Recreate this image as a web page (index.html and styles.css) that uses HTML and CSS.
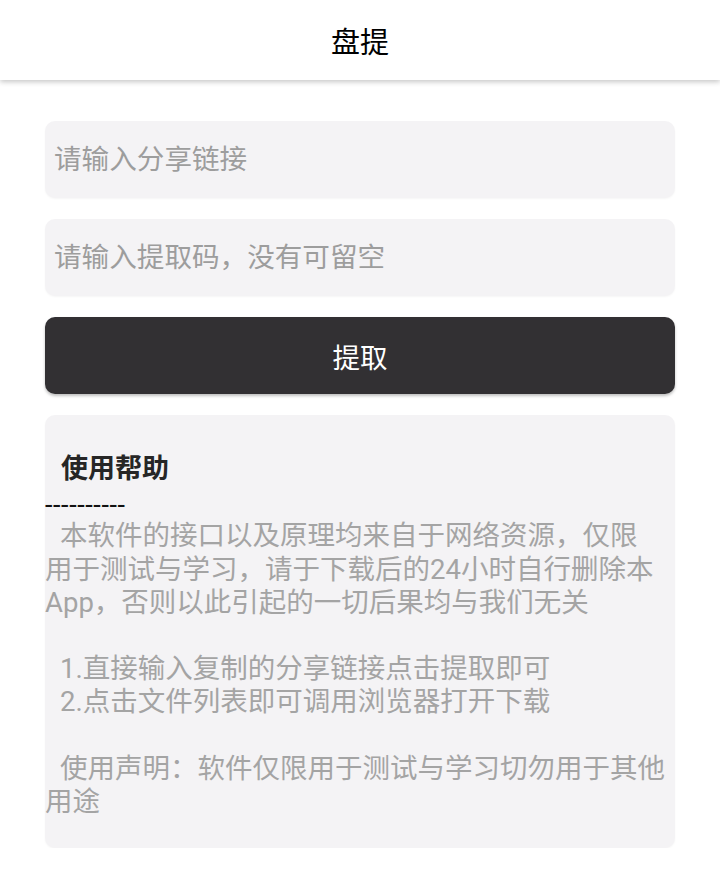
FILE: index.html
```html
<!DOCTYPE html>
<html lang="zh-CN">
<head>
<meta charset="utf-8">
<title>盘提</title>
<link rel="stylesheet" href="styles.css">
</head>
<body>
<header class="appbar">
  <h1 class="appbar-title">盘提</h1>
</header>
<main class="content">
  <input class="field" type="text" placeholder="请输入分享链接">
  <input class="field" type="text" placeholder="请输入提取码，没有可留空">
  <button class="btn-extract" type="button">提取</button>
  <section class="help-card">
    <h2 class="help-title">使用帮助</h2>
    <div class="help-rule">----------</div>
    <p class="help-text"><span class="indent"></span>本软件的接口以及原理均来自于网络资源，仅限<br>用于测试与学习，请于下载后的24小时自行删除本<br>App，否则以此引起的一切后果均与我们无关</p>
    <p class="help-text blank">&nbsp;</p>
    <p class="help-text"><span class="indent"></span>1.直接输入复制的分享链接点击提取即可</p>
    <p class="help-text"><span class="indent"></span>2.点击文件列表即可调用浏览器打开下载</p>
    <p class="help-text blank">&nbsp;</p>
    <p class="help-text"><span class="indent"></span>使用声明：软件仅限用于测试与学习切勿用于其他<br>用途</p>
  </section>
</main>
</body>
</html>
```

FILE: styles.css
```css
* { box-sizing: border-box; }

html, body {
  margin: 0;
  padding: 0;
  background: #ffffff;
  font-family: Roboto, "Noto Sans CJK SC", sans-serif;
}

.appbar {
  height: 80px;
  background: #ffffff;
  display: flex;
  align-items: center;
  justify-content: center;
  box-shadow: 0 2px 5px rgba(0, 0, 0, 0.22);
  position: relative;
  z-index: 1;
}

.appbar-title {
  margin: 0;
  padding-top: 7px;
  font-size: 29px;
  font-weight: 400;
  color: #000000;
  line-height: 1;
}

.content {
  padding: 41px 45px 0;
  display: flex;
  flex-direction: column;
  gap: 21px;
}

.field {
  display: block;
  width: 100%;
  height: 77px;
  border: none;
  outline: none;
  border-radius: 10px;
  background: #f4f3f5;
  padding: 0 9px;
  font-family: Roboto, "Noto Sans CJK SC", sans-serif;
  font-size: 27.6px;
  color: #333333;
  box-shadow: 0 1px 2px rgba(0, 0, 0, 0.04);
}

.field::placeholder {
  color: #9d9d9d;
}

.btn-extract {
  display: block;
  width: 100%;
  height: 77px;
  border: none;
  border-radius: 10px;
  background: #323033;
  color: #ffffff;
  font-family: Roboto, "Noto Sans CJK SC", sans-serif;
  font-size: 27.5px;
  padding: 0;
  box-shadow: 0 2px 3px rgba(0, 0, 0, 0.25);
}

.help-card {
  background: #f4f3f5;
  border-radius: 10px;
  padding: 38px 0 30px 0;
  line-height: 33.2px;
  box-shadow: 0 1px 2px rgba(0, 0, 0, 0.04);
}

.help-title {
  margin: 0;
  padding-left: 16px;
  font-size: 27px;
  font-weight: 700;
  color: #262626;
  line-height: 33.2px;
}

.help-rule {
  font-size: 27px;
  color: #111111;
  letter-spacing: 0.6px;
  line-height: 33.2px;
  padding-top: 3px;
  margin-bottom: -3px;
}

.help-text {
  margin: 0;
  font-size: 27.5px;
  color: #a4a4a4;
  line-height: 33.2px;
  white-space: nowrap;
}

.indent {
  display: inline-block;
  width: 15px;
}
```
